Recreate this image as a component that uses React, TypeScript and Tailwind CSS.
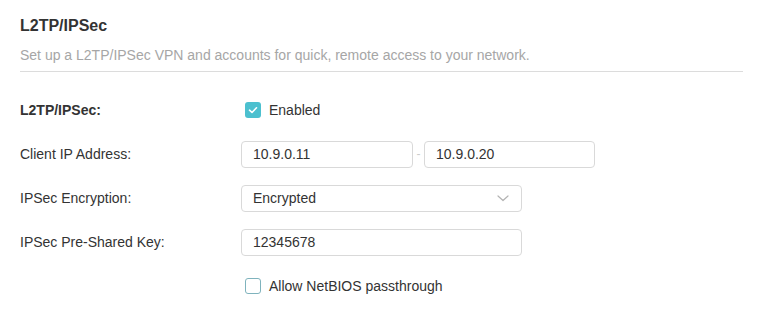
import React from "react";

const Check = ({ checked }: { checked: boolean }) => (
  <span
    className={`flex h-4 w-4 items-center justify-center rounded-[3px] ${
      checked ? "bg-[#4cc0cf]" : "border border-[#7fb3bd] bg-white"
    }`}
  >
    {checked && (
      <svg width="10" height="8" viewBox="0 0 10 8" fill="none">
        <path d="M1.5 4.2 L4 6.5 L8.5 1.8" stroke="white" strokeWidth="1.6" strokeLinecap="round" strokeLinejoin="round" />
      </svg>
    )}
  </span>
);

const Field = ({ value, w }: { value: string; w: string }) => (
  <div className={`flex h-[27px] ${w} items-center rounded-[4px] border border-[#d9d9d9] bg-white px-[11px] text-[14px] text-[#333]`}>
    {value}
  </div>
);

const Row = ({ label, bold, children }: { label: string; bold?: boolean; children: React.ReactNode }) => (
  <div className="flex h-[44px] items-center">
    <div className={`w-[221px] text-[14px] text-[#333] ${bold ? "font-bold" : ""}`}>{label}</div>
    <div className="flex items-center">{children}</div>
  </div>
);

export default function App() {
  return (
    <div
      className="h-[309px] w-[759px] bg-white pl-5 pr-4 pt-[15px]"
      style={{ fontFamily: '"Liberation Sans", Arial, sans-serif' }}
    >
      <h2 className="text-[16px] font-bold leading-[22px] text-[#333]">L2TP/IPSec</h2>
      <p className="mt-[8px] text-[14px] leading-[20px] text-[#a6a6a6]">
        Set up a L2TP/IPSec VPN and accounts for quick, remote access to your network.
      </p>
      <div className="mt-[6px] h-px w-[723px] bg-[#dcdcdc]" />
      <div className="mt-[16px]">
        <Row label="L2TP/IPSec:" bold>
          <label className="ml-1 flex items-center gap-2 text-[14px] text-[#333]">
            <Check checked />
            Enabled
          </label>
        </Row>
        <Row label="Client IP Address:">
          <Field value="10.9.0.11" w="w-[172px]" />
          <span className="w-[11px] text-center text-[12px] text-[#ccc]">-</span>
          <Field value="10.9.0.20" w="w-[171px]" />
        </Row>
        <Row label="IPSec Encryption:">
          <div className="flex h-[27px] w-[281px] items-center justify-between rounded-[4px] border border-[#d9d9d9] bg-white pl-[11px] pr-[12px] text-[14px] text-[#333]">
            Encrypted
            <svg width="12" height="7" viewBox="0 0 12 7" fill="none">
              <path d="M1 1 L6 5.5 L11 1" stroke="#b3b3b3" strokeWidth="1.2" strokeLinecap="round" strokeLinejoin="round" />
            </svg>
          </div>
        </Row>
        <Row label="IPSec Pre-Shared Key:">
          <Field value="12345678" w="w-[281px]" />
        </Row>
        <Row label="">
          <label className="ml-1 flex items-center gap-2 text-[14px] text-[#333]">
            <Check checked={false} />
            Allow NetBIOS passthrough
          </label>
        </Row>
      </div>
    </div>
  );
}
